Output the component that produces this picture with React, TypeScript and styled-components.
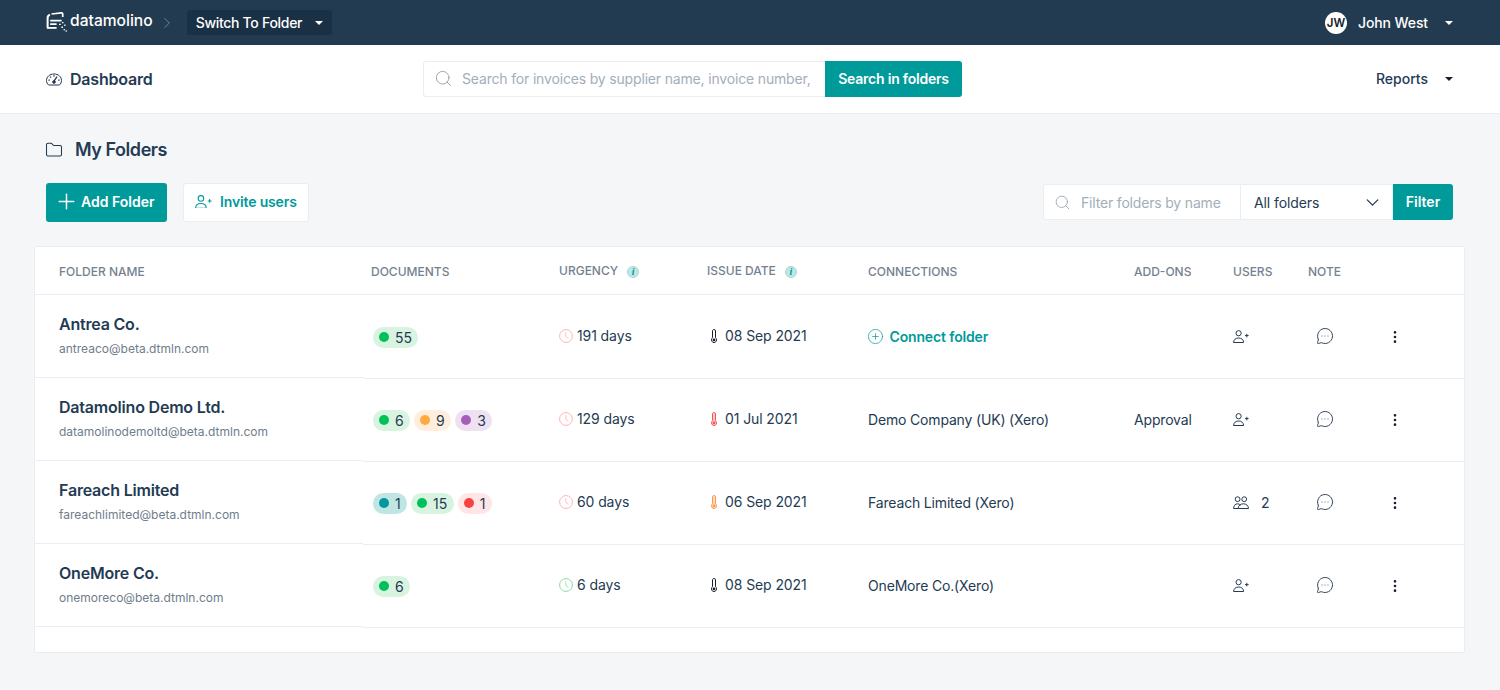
import React from "react";
import styled, { createGlobalStyle } from "styled-components";
import { Search, Folder, MessageCircleMore, MoreVertical, Plus, CirclePlus, ChevronDown, ChevronRight } from "lucide-react";

const GlobalStyle = createGlobalStyle`
  html, body { margin: 0; padding: 0; background: #f4f6f8; }
  body { font-family: Inter, "Noto Sans", sans-serif; color: #243b53; -webkit-font-smoothing: antialiased; }
  * { box-sizing: border-box; }
`;

const TEAL = "#009a9a";
const INK = "#243b53";
const LINE = "#e9eef3";

const Page = styled.div`
  width: 1500px;
  height: 690px;
  overflow: hidden;
`;

const TopBar = styled.header`
  height: 45px;
  background: #233b50;
  display: flex;
  align-items: center;
  padding: 0 46px;
  color: #fff;
`;
const LogoLink = styled.div`
  display: flex;
  align-items: center;
  gap: 3px;
  font-size: 15.6px;
  font-weight: 500;
  padding-bottom: 1px;
`;
const LogoText = styled.span`
  padding-bottom: 3px;
`;
const Crumb = styled.span`
  display: flex;
  color: #8a9bab;
  margin: 0 10.5px 0 5.5px;
`;
const FolderSwitch = styled.div`
  height: 25px;
  width: 145px;
  border-radius: 3px;
  background: #1a3045;
  display: flex;
  align-items: center;
  justify-content: space-between;
  padding: 0 9px;
  font-size: 14px;
  font-weight: 500;
  letter-spacing: -0.3px;
`;
const Caret = styled.span<{ $dark?: boolean }>`
  width: 0;
  height: 0;
  border-left: 4px solid transparent;
  border-right: 4px solid transparent;
  border-top: 4px solid ${p => (p.$dark ? "#16202c" : "#fff")};
`;
const Spacer = styled.div`
  flex: 1;
`;
const UserMenu = styled.div`
  display: flex;
  align-items: center;
  font-size: 14px;
  font-weight: 500;
  margin-right: 1px;
`;
const Avatar = styled.span`
  width: 22px;
  height: 22px;
  border-radius: 50%;
  background: #fff;
  color: #16202c;
  font-size: 11.5px;
  font-weight: 600;
  display: flex;
  align-items: center;
  justify-content: center;
  margin-right: 11px;
`;
const UserName = styled.span`
  margin-right: 17px;
  letter-spacing: -0.1px;
`;

const SubBar = styled.div`
  height: 69px;
  background: #fff;
  border-bottom: 1px solid ${LINE};
  display: grid;
  grid-template-columns: 377px 539px 1fr;
  align-items: center;
  padding: 0 47px 0 46px;
`;
const DashLink = styled.div`
  display: flex;
  align-items: center;
  gap: 8px;
  font-size: 16px;
  letter-spacing: -0.2px;
  font-weight: 600;
  color: ${INK};
`;
const SearchGroup = styled.div`
  display: flex;
  height: 36px;
`;
const SearchBox = styled.div`
  flex: 1;
  min-width: 0;
  background: #fff;
  border: 1px solid ${LINE};
  border-right: 0;
  border-radius: 3px 0 0 3px;
  display: flex;
  align-items: center;
  gap: 9px;
  padding: 0 0 2px 10px;
  font-size: 14px;
  letter-spacing: -0.17px;
  color: #a3aeb9;
  white-space: nowrap;
  overflow: hidden;
`;
const SearchButton = styled.div`
  width: 137px;
  background: ${TEAL};
  color: #fff;
  font-size: 14px;
  letter-spacing: -0.22px;
  font-weight: 600;
  border-radius: 0 3px 3px 0;
  padding-bottom: 2px;
  display: flex;
  align-items: center;
  justify-content: center;
`;
const Reports = styled.div`
  display: flex;
  justify-content: flex-end;
  align-items: center;
  gap: 17px;
  font-size: 14px;
  font-weight: 500;
  color: ${INK};
`;
const ReportsLabel = styled.span`
  padding-bottom: 1px;
`;

const Main = styled.main`
  padding: 24px 35px 0 34px;
`;
const Heading = styled.div`
  height: 24px;
  padding: 0 0 1px 11px;
  display: flex;
  align-items: center;
  gap: 12px;
  font-size: 18px;
  letter-spacing: -0.45px;
  font-weight: 600;
  color: ${INK};
`;
const Toolbar = styled.div`
  margin-top: 21px;
  height: 39px;
  padding: 0 12px;
  display: flex;
  align-items: center;
  gap: 16px;
`;
const AddButton = styled.div`
  width: 121px;
  height: 39px;
  border-radius: 3px;
  background: ${TEAL};
  color: #fff;
  font-size: 14px;
  font-weight: 600;
  display: flex;
  align-items: center;
  gap: 2px;
  padding: 0 0 2px 8px;
`;
const InviteButton = styled.div`
  width: 126px;
  height: 39px;
  border: 1px solid ${LINE};
  border-radius: 3px;
  background: #fff;
  color: ${TEAL};
  font-size: 14px;
  letter-spacing: -0.15px;
  font-weight: 600;
  display: flex;
  align-items: center;
  gap: 8px;
  padding: 0 0 2px 11px;
`;
const FilterGroup = styled.div`
  margin-left: auto;
  display: flex;
  height: 36px;
  margin-top: -2px;
`;
const FilterInput = styled.div`
  width: 198px;
  background: #fff;
  border: 1px solid ${LINE};
  border-radius: 3px 0 0 3px;
  display: flex;
  align-items: center;
  gap: 10px;
  padding: 2px 0 0 10px;
  font-size: 14px;
  letter-spacing: -0.18px;
  color: #a3aeb9;
  white-space: nowrap;
`;
const FilterSelect = styled.div`
  width: 152px;
  background: #fff;
  border: 1px solid ${LINE};
  border-left: 0;
  display: flex;
  align-items: center;
  justify-content: space-between;
  padding: 2px 9px 0 13px;
  font-size: 14px;
  letter-spacing: -0.1px;
  color: ${INK};
`;
const FilterButton = styled.div`
  width: 60px;
  background: ${TEAL};
  color: #fff;
  font-size: 14px;
  font-weight: 600;
  border-radius: 0 3px 3px 0;
  display: flex;
  align-items: center;
  justify-content: center;
`;

const COLS = "196px 148px 161px 266px 99px 75px 77px 1fr";

const Card = styled.section`
  margin-top: 24px;
  width: 1431px;
  height: 407px;
  background: #fff;
  border: 1px solid ${LINE};
  border-radius: 2px;
`;
const HeaderRow = styled.div`
  height: 48px;
  border-bottom: 1px solid ${LINE};
  display: grid;
  grid-template-columns: 328px ${COLS};
  align-items: center;
`;
const HeadCell = styled.div<{ $first?: boolean }>`
  padding: 2px 0 0 ${p => (p.$first ? "24px" : "0")};
  font-size: 12px;
  font-weight: 500;
  color: #748290;
  display: flex;
  align-items: center;
  gap: 9px;
`;
const DocsHead = styled(HeadCell)`
  padding-left: 8px;
`;
const HeadLabel = styled.span`
  padding-bottom: 2px;
`;
const InfoBadge = styled.span`
  width: 12px;
  height: 12px;
  border-radius: 50%;
  background: #bfe6e2;
  border: 1px solid #a5dad5;
  color: ${TEAL};
  font-family: "Liberation Serif", serif;
  font-style: italic;
  font-weight: 700;
  font-size: 10px;
  line-height: 10px;
  text-align: center;
`;

const Row = styled.div`
  height: 83px;
  display: grid;
  grid-template-columns: 328px 1fr;
`;
const NameCell = styled.div`
  padding: 0 0 2px 24px;
  border-bottom: 1px solid ${LINE};
  display: flex;
  flex-direction: column;
  justify-content: center;
  gap: 7px;
`;
const FolderTitle = styled.div`
  font-size: 16px;
  letter-spacing: -0.2px;
  line-height: 20px;
  font-weight: 600;
  color: ${INK};
`;
const FolderMail = styled.div`
  font-size: 12px;
  line-height: 16px;
  color: #6f7d8b;
`;
const Rest = styled.div<{ $first?: boolean }>`
  display: grid;
  grid-template-columns: ${COLS};
  align-items: center;
  border-top: 1px solid ${p => (p.$first ? "transparent" : LINE)};
  padding-bottom: 4px;
`;
const Pills = styled.div`
  display: flex;
  gap: 4px;
  padding: 4px 0 0 10px;
`;
const Pill = styled.span<{ $bg: string }>`
  height: 21px;
  border-radius: 11px;
  background: ${p => p.$bg};
  display: flex;
  align-items: center;
  gap: 6px;
  padding: 0 6.4px 0 6px;
  font-size: 14px;
  color: ${INK};
`;
const Dot = styled.i<{ $c: string }>`
  width: 10px;
  height: 10px;
  border-radius: 50%;
  background: ${p => p.$c};
`;
const Cell = styled.div`
  display: flex;
  align-items: center;
  font-size: 14px;
  color: ${INK};
  white-space: nowrap;
`;
const Urgency = styled(Cell)`
  gap: 4px;
  letter-spacing: -0.1px;
`;
const DateCell = styled(Cell)`
  gap: 8px;
  padding-left: 4px;
  letter-spacing: -0.1px;
`;
const TextCell = styled(Cell)`
  padding-top: 2px;
  letter-spacing: -0.17px;
`;
const ConnectLink = styled(Cell)`
  gap: 6px;
  padding-top: 2px;
  margin-left: -1.5px;
  color: ${TEAL};
  letter-spacing: -0.15px;
  font-weight: 600;
`;
const UsersCell = styled(Cell)`
  gap: 12px;
  padding-top: 3px;
`;
const NoteCell = styled(Cell)`
  padding: 2px 0 0 8px;
`;
const MoreCell = styled(Cell)`
  padding: 3px 0 0 2px;
  color: #16202c;
`;
const FootLine = styled.div`
  margin-left: 328px;
  border-top: 1px solid ${LINE};
`;

function Logo() {
  return (
    <svg width="21" height="20" viewBox="0 0 21 20" fill="none" stroke="#fff">
      <path d="M1.6 15.2V6C1.6 4.4 2.2 3.2 4 2.6" strokeWidth="2" />
      <path d="M5.5 2L15.5 .9C16.3 .8 16.7 1.2 16.7 2V5" strokeWidth="1.7" />
      <path d="M.8 15.9H10.6" strokeWidth="1.8" />
      <path d="M4.2 8.6H15.6M4.2 12.2H10.6" strokeWidth="1.7" />
      <path d="M13 12.4h1.7M16 10.6h1.5M15.4 15.2h1.6M18.2 13.2h1.3M17.6 17.6h1.3M19.6 19h1.2" strokeWidth="1.4" />
    </svg>
  );
}

function Gauge() {
  return (
    <svg width="16" height="13" viewBox="0 0 16 13" fill="none" stroke="#243b53" strokeWidth="1">
      <path d="M2.6 12H13.4C14.6 10.9 15.5 9.4 15.5 7.6C15.5 3.6 12.2 1 8 1C3.8 1 .5 3.6 .5 7.6C.5 9.4 1.4 10.9 2.6 12Z" />
      <path d="M8 8.2L11 3.6" strokeWidth="1.3" />
      <circle cx="8" cy="9" r="1.3" fill="#243b53" />
      <path d="M8 2.3V3.7M4.2 3.5L5 4.6M2.4 7.2H3.8M12.2 7.2H13.6" strokeWidth="1.2" />
    </svg>
  );
}

function PersonPlus({ size = 16 }: { size?: number }) {
  return (
    <svg width={size} height={size * 0.8125} viewBox="0 0 16 13" fill="none" stroke="currentColor" strokeWidth="1">
      <circle cx="5.6" cy="3.2" r="2.6" />
      <path d="M.6 12.5C.6 9.6 2.8 8 5.6 8C8.4 8 10.6 9.6 10.6 12.5Z" />
      <path d="M12 5.6H15.6M13.8 3.8V7.4" />
    </svg>
  );
}

function People() {
  return (
    <svg width="16" height="13" viewBox="0 0 16 13" fill="none" stroke="currentColor" strokeWidth="1">
      <circle cx="4.6" cy="3.2" r="2.4" />
      <circle cx="11.2" cy="3.2" r="2.4" />
      <path d="M.6 12.5C.6 9.8 2.2 7.8 4.6 7.8C5.8 7.8 6.8 8.3 7.4 9.2" />
      <path d="M5.2 12.5C5.2 9.6 7.6 7.8 10.4 7.8C13.2 7.8 15.5 9.6 15.5 12.5Z" />
      <path d="M.6 12.5H5.2" />
    </svg>
  );
}

function ClockIcon({ c }: { c: string }) {
  return (
    <svg width="14" height="14" viewBox="0 0 14 14" fill="none" stroke={c} strokeWidth="1" style={{ marginTop: 2 }}>
      <circle cx="7" cy="7" r="6.4" />
      <path d="M6.8 3.2V7.4L9.4 9.4" strokeWidth="0.8" />
    </svg>
  );
}

function Thermo({ c, fill }: { c: string; fill?: string }) {
  return (
    <svg width="6" height="14" viewBox="0 0 6 14" fill="none" style={{ marginTop: 2 }}>
      <path
        d="M1.5 8.7V1.9C1.5 1 2.1 .5 3 .5C3.9 .5 4.5 1 4.5 1.9V8.7C5.1 9.2 5.5 10 5.5 10.9C5.5 12.4 4.4 13.5 3 13.5C1.6 13.5 .5 12.4 .5 10.9C.5 10 .9 9.2 1.5 8.7Z"
        stroke={c}
        strokeWidth="1"
        fill={fill || "none"}
      />
      <circle cx="3" cy="10.9" r="1.3" fill={c} />
    </svg>
  );
}

const GREEN: [string, string] = ["#d9f3e1", "#00c159"];
const ORANGE: [string, string] = ["#ffeedd", "#ffa93f"];
const PURPLE: [string, string] = ["#eee1f1", "#a65fb8"];
const TEALP: [string, string] = ["#bfe6e2", "#00979f"];
const RED: [string, string] = ["#ffe5e6", "#f54244"];

type FolderRow = {
  name: string;
  mail: string;
  docs: [[string, string], number][];
  days: string;
  clock: string;
  date: string;
  thermo: string;
  thermoFill?: string;
  conn?: string;
  addon?: string;
  users?: number;
};

const folders: FolderRow[] = [
  { name: "Antrea Co.", mail: "antreaco@beta.dtmln.com", docs: [[GREEN, 55]], days: "191 days", clock: "#ffb3b5", date: "08 Sep 2021", thermo: "#16202c" },
  { name: "Datamolino Demo Ltd.", mail: "datamolinodemoltd@beta.dtmln.com", docs: [[GREEN, 6], [ORANGE, 9], [PURPLE, 3]], days: "129 days", clock: "#ffb3b5", date: "01 Jul 2021", thermo: "#f5565a", thermoFill: "#ffc9ca", conn: "Demo Company (UK) (Xero)", addon: "Approval" },
  { name: "Fareach Limited", mail: "fareachlimited@beta.dtmln.com", docs: [[TEALP, 1], [GREEN, 15], [RED, 1]], days: "60 days", clock: "#ffb3b5", date: "06 Sep 2021", thermo: "#ff9650", thermoFill: "#ffdcc4", conn: "Fareach Limited (Xero)", users: 2 },
  { name: "OneMore Co.", mail: "onemoreco@beta.dtmln.com", docs: [[GREEN, 6]], days: "6 days", clock: "#8fd9a3", date: "08 Sep 2021", thermo: "#16202c", conn: "OneMore Co.(Xero)" },
];

export default function App() {
  return (
    <Page>
      <GlobalStyle />
      <TopBar>
        <LogoLink>
          <Logo />
          <LogoText>datamolino</LogoText>
        </LogoLink>
        <Crumb>
          <ChevronRight size={18} strokeWidth={1} />
        </Crumb>
        <FolderSwitch>
          Switch To Folder
          <Caret />
        </FolderSwitch>
        <Spacer />
        <UserMenu>
          <Avatar>JW</Avatar>
          <UserName>John West</UserName>
          <Caret />
        </UserMenu>
      </TopBar>
      <SubBar>
        <DashLink>
          <Gauge />
          Dashboard
        </DashLink>
        <SearchGroup>
          <SearchBox>
            <Search size={19} strokeWidth={1.1} color="#8f9ba7" />
            Search for invoices by supplier name, invoice number,
          </SearchBox>
          <SearchButton>Search in folders</SearchButton>
        </SearchGroup>
        <Reports>
          <ReportsLabel>Reports</ReportsLabel>
          <Caret $dark />
        </Reports>
      </SubBar>
      <Main>
        <Heading>
          <Folder size={18} strokeWidth={1.4} color="#243b53" />
          My Folders
        </Heading>
        <Toolbar>
          <AddButton>
            <Plus size={25} strokeWidth={1.4} />
            Add Folder
          </AddButton>
          <InviteButton>
            <PersonPlus size={17} />
            Invite users
          </InviteButton>
          <FilterGroup>
            <FilterInput>
              <Search size={17} strokeWidth={1.1} color="#8f9ba7" />
              Filter folders by name
            </FilterInput>
            <FilterSelect>
              All folders
              <ChevronDown size={21} strokeWidth={1.5} color="#243b53" />
            </FilterSelect>
            <FilterButton>Filter</FilterButton>
          </FilterGroup>
        </Toolbar>
        <Card>
          <HeaderRow>
            <HeadCell $first>FOLDER NAME</HeadCell>
            <DocsHead>DOCUMENTS</DocsHead>
            <HeadCell>
              <HeadLabel>URGENCY</HeadLabel>
              <InfoBadge>i</InfoBadge>
            </HeadCell>
            <HeadCell>
              <HeadLabel>ISSUE DATE</HeadLabel>
              <InfoBadge>i</InfoBadge>
            </HeadCell>
            <HeadCell>CONNECTIONS</HeadCell>
            <HeadCell>ADD-ONS</HeadCell>
            <HeadCell>USERS</HeadCell>
            <HeadCell>NOTE</HeadCell>
            <span />
          </HeaderRow>
          {folders.map((f, i) => (
            <Row key={f.name}>
              <NameCell>
                <FolderTitle>{f.name}</FolderTitle>
                <FolderMail>{f.mail}</FolderMail>
              </NameCell>
              <Rest $first={i === 0}>
                <Pills>
                  {f.docs.map(([tone, n], k) => (
                    <Pill key={k} $bg={tone[0]}>
                      <Dot $c={tone[1]} />
                      {n}
                    </Pill>
                  ))}
                </Pills>
                <Urgency>
                  <ClockIcon c={f.clock} />
                  {f.days}
                </Urgency>
                <DateCell>
                  <Thermo c={f.thermo} fill={f.thermoFill} />
                  {f.date}
                </DateCell>
                {f.conn ? (
                  <TextCell>{f.conn}</TextCell>
                ) : (
                  <ConnectLink>
                    <CirclePlus size={17} strokeWidth={1} />
                    Connect folder
                  </ConnectLink>
                )}
                <TextCell>{f.addon}</TextCell>
                <UsersCell>
                  {f.users ? <People /> : <PersonPlus />}
                  {f.users}
                </UsersCell>
                <NoteCell>
                  <MessageCircleMore size={18} strokeWidth={1.25} />
                </NoteCell>
                <MoreCell>
                  <MoreVertical size={16} strokeWidth={2} />
                </MoreCell>
              </Rest>
            </Row>
          ))}
          <FootLine />
        </Card>
      </Main>
    </Page>
  );
}
